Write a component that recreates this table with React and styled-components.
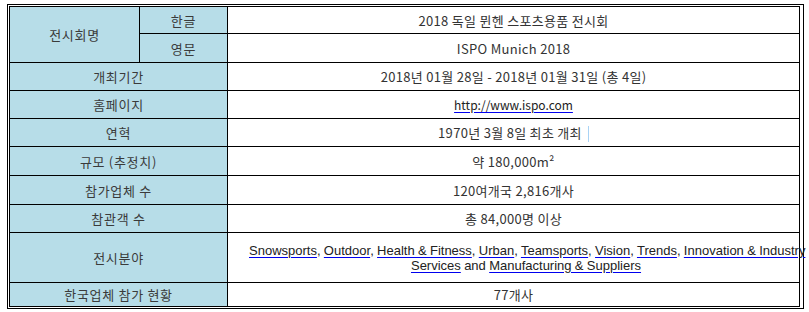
import React from 'react';
import styled, { createGlobalStyle } from 'styled-components';

const GlobalStyle = createGlobalStyle`
  body {
    margin: 0;
    background: #fff;
    font-family: "Noto Sans CJK KR", "Liberation Sans", sans-serif;
  }
`;

const Frame = styled.div`
  width: 793px;
  margin: 4px 0 0 7px;
  border: 1px solid #000;
  padding: 1px;
`;

const Table = styled.table`
  width: 791px;
  table-layout: fixed;
  border-collapse: collapse;
  border: 1px solid #000;
  color: #333;
  font-size: 13px;
  letter-spacing: 0.3px;
`;

const Row = styled.tr`
  height: ${p => p.$h}px;
`;

const Label = styled.th`
  background: #b7dde8;
  border: 1px solid #000;
  font-weight: normal;
  font-size: 13px;
  letter-spacing: 0.7px;
  color: #3a3a3a;
  text-align: center;
  vertical-align: middle;
  padding: 0;
`;

const Value = styled.td`
  border: 1px solid #000;
  text-align: center;
  vertical-align: middle;
  padding: 0;
  overflow: visible;
`;

const Link = styled.a`
  color: #222;
  text-decoration: underline;
  text-decoration-color: #0000ee;
  text-underline-offset: 2px;
  ${p => p.$site && 'font-size: 12px; letter-spacing: 0;'}
`;

const Fields = styled.div`
  margin: 0 -4px 0 21px;
  line-height: 15px;
  font-family: "Liberation Sans", Arial, sans-serif;
  font-size: 13px;
  letter-spacing: 0;
  word-spacing: -0.3px;
  color: #222;
  white-space: nowrap;
`;

const Caret = styled.span`
  display: inline-block;
  width: 1px;
  height: 16px;
  margin-left: 6px;
  vertical-align: middle;
  background: #a9d3f5;
`;

const fields = ['Snowsports', 'Outdoor', 'Health & Fitness', 'Urban', 'Teamsports', 'Vision', 'Trends'];

export default function App() {
  return (
    <>
      <GlobalStyle />
      <Frame>
        <Table>
          <colgroup>
            <col style={{ width: 130 }} />
            <col style={{ width: 88 }} />
            <col />
          </colgroup>
          <tbody>
            <Row $h={27}>
              <Label rowSpan={2}>전시회명</Label>
              <Label>한글</Label>
              <Value>2018 독일 뮌헨 스포츠용품 전시회</Value>
            </Row>
            <Row $h={29}>
              <Label>영문</Label>
              <Value>ISPO Munich 2018</Value>
            </Row>
            <Row $h={28}>
              <Label colSpan={2}>개최기간</Label>
              <Value>2018년 01월 28일 - 2018년 01월 31일 (총 4일)</Value>
            </Row>
            <Row $h={28}>
              <Label colSpan={2}>홈페이지</Label>
              <Value><Link $site href="#">http://www.ispo.com</Link></Value>
            </Row>
            <Row $h={28}>
              <Label colSpan={2}>연혁</Label>
              <Value>1970년 3월 8일 최초 개최<Caret /></Value>
            </Row>
            <Row $h={29}>
              <Label colSpan={2}>규모 (추정치)</Label>
              <Value>약 180,000m²</Value>
            </Row>
            <Row $h={29}>
              <Label colSpan={2}>참가업체 수</Label>
              <Value>120여개국 2,816개사</Value>
            </Row>
            <Row $h={28}>
              <Label colSpan={2}>참관객 수</Label>
              <Value>총 84,000명 이상</Value>
            </Row>
            <Row $h={50}>
              <Label colSpan={2}>전시분야</Label>
              <Value>
                <Fields>
                  {fields.map(f => (
                    <React.Fragment key={f}><Link href="#">{f}</Link>, </React.Fragment>
                  ))}
                  <Link href="#">Innovation &amp; Industry</Link>
                  <br />
                  <Link href="#">Services</Link> and <Link href="#">Manufacturing &amp; Suppliers</Link>
                </Fields>
              </Value>
            </Row>
            <Row $h={24}>
              <Label colSpan={2}>한국업체 참가 현황</Label>
              <Value>77개사</Value>
            </Row>
          </tbody>
        </Table>
      </Frame>
    </>
  );
}
